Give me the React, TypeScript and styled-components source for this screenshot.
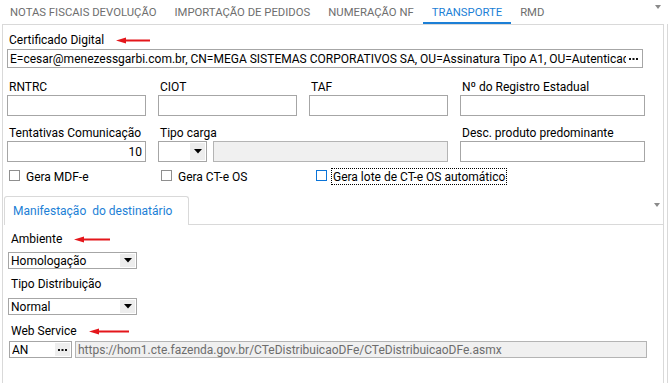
import React from "react";
import styled, { createGlobalStyle } from "styled-components";

const GlobalStyle = createGlobalStyle`
  html, body {
    margin: 0;
    padding: 0;
    background: #ffffff;
  }
  body {
    font-family: Roboto, "Liberation Sans", Arial, sans-serif;
    font-size: 12px;
    color: #000000;
  }
  * {
    box-sizing: border-box;
  }
`;

const BLUE = "#1c7fd6";
const PANEL_LINE = "#d9d9d9";
const INPUT_LINE = "#a6a6a6";

const Page = styled.div`
  width: 669px;
  height: 383px;
  overflow: hidden;
  display: flex;
  flex-direction: column;
`;

const TabBar = styled.div`
  display: flex;
  height: 24px;
  padding-left: 1px;
  flex-shrink: 0;
`;

const Tab = styled.div<{ $active?: boolean }>`
  height: 24px;
  padding: 4px 9px 0;
  line-height: 18px;
  font-size: 11.3px;
  text-transform: uppercase;
  white-space: nowrap;
  color: ${(p) => (p.$active ? BLUE : "#6e6e6e")};
  border-bottom: 2px solid ${(p) => (p.$active ? BLUE : "transparent")};
`;

const MenuCaret = styled.div<{ $top: number; $right: number }>`
  width: 0;
  height: 0;
  margin-left: auto;
  margin-right: ${(p) => p.$right}px;
  margin-top: ${(p) => p.$top}px;
  border-left: 3.5px solid transparent;
  border-right: 3.5px solid transparent;
  border-top: 4px solid #8a8a8a;
`;

const Frame = styled.div`
  display: flex;
  flex: 1;
  min-height: 0;
  padding-left: 2px;
`;

const Panel = styled.div`
  width: 662px;
  border: 1px solid ${PANEL_LINE};
  border-bottom: none;
  display: flex;
  flex-direction: column;
`;

const Edge = styled.div`
  width: 1px;
  margin-left: 3px;
  background: ${PANEL_LINE};
`;

const Fields = styled.div`
  padding: 7px 0 0 4px;
`;

const Label = styled.div<{ $indent?: number }>`
  display: flex;
  align-items: center;
  gap: 12px;
  height: 16px;
  line-height: 16px;
  padding-left: ${(p) => p.$indent ?? 2}px;
  white-space: nowrap;
`;

const TextBox = styled.div<{ $w?: number; $h?: number; $disabled?: boolean; $right?: boolean }>`
  display: flex;
  align-items: center;
  width: ${(p) => (p.$w ? `${p.$w}px` : "100%")};
  height: ${(p) => p.$h ?? 21}px;
  border: 1px solid ${(p) => (p.$disabled ? "#b4b4b4" : INPUT_LINE)};
  background: ${(p) => (p.$disabled ? "#f0f0f0" : "#ffffff")};
  color: ${(p) => (p.$disabled ? "#6d6d6d" : "#000000")};
  padding: 0 3px 0 2px;
  justify-content: ${(p) => (p.$right ? "flex-end" : "flex-start")};
  overflow: hidden;
  white-space: nowrap;
`;

const BoxText = styled.span`
  flex: 1;
  overflow: hidden;
  white-space: nowrap;
`;

const DotsButton = styled.span<{ $shaded?: boolean }>`
  display: flex;
  align-items: center;
  justify-content: center;
  width: 15px;
  align-self: stretch;
  margin: ${(p) => (p.$shaded ? "1px -2px 1px 0" : "0 -2px 0 0")};
  background: ${(p) => (p.$shaded ? "#eeeeee" : "transparent")};
`;

const CertBox = styled(TextBox)`
  margin-top: 1px;
`;

const Grid = styled.div`
  display: grid;
  grid-template-columns: 139px 139px 139px 185px;
  column-gap: 12px;
  row-gap: 9px;
  margin-top: 11px;
`;

const Field = styled.div<{ $span?: number }>`
  grid-column: span ${(p) => p.$span ?? 1};
  display: flex;
  flex-direction: column;
`;

const ComboPair = styled.div`
  display: flex;
  gap: 6px;
`;

const Combo = styled.div<{ $w: number; $h: number }>`
  display: flex;
  align-items: center;
  width: ${(p) => p.$w}px;
  height: ${(p) => p.$h}px;
  border: 1px solid ${INPUT_LINE};
  background: #ffffff;
  padding-left: 2px;
  flex-shrink: 0;
`;

const ComboValue = styled.span`
  flex: 1;
  white-space: nowrap;
`;

const ComboButton = styled.span`
  display: flex;
  align-items: center;
  justify-content: center;
  width: 15px;
  align-self: stretch;
  margin: 1px 1px 1px 0;
  background: #ededed;
`;

const CheckRow = styled.div`
  display: grid;
  grid-template-columns: 139px 139px 139px 185px;
  column-gap: 12px;
  margin-top: 6px;
  height: 17px;
`;

const CheckItem = styled.div<{ $offset: number }>`
  display: flex;
  align-items: center;
  margin-left: ${(p) => p.$offset}px;
  white-space: nowrap;
`;

const CheckBox = styled.span<{ $focused?: boolean }>`
  width: 11px;
  height: 11px;
  flex-shrink: 0;
  margin-top: -3px;
  border: 1px solid ${(p) => (p.$focused ? "#0b74d8" : "#8f8f8f")};
  background: #ffffff;
`;

const CheckText = styled.span<{ $focused?: boolean }>`
  margin-left: 4px;
  padding: 1px 1px 0;
  line-height: 14px;
  border: 1px dotted ${(p) => (p.$focused ? "#000000" : "transparent")};
`;

const InnerTabBar = styled.div`
  display: flex;
  height: 29px;
  margin-top: 11px;
`;

const InnerTab = styled.div`
  width: 185px;
  margin-left: 1px;
  height: 29px;
  padding: 6px 0 0 8px;
  line-height: 16px;
  white-space: pre;
  color: ${BLUE};
  border: 1px solid ${PANEL_LINE};
  border-bottom: none;
  border-radius: 3px 3px 0 0;
`;

const InnerFiller = styled.div`
  flex: 1;
  display: flex;
  border-bottom: 1px solid ${PANEL_LINE};
`;

const InnerBody = styled.div`
  padding: 6px 0 0 5px;
  display: flex;
  flex-direction: column;
`;

const Stack = styled.div<{ $gap: number }>`
  margin-top: ${(p) => p.$gap}px;
`;

const ServiceRow = styled.div`
  display: flex;
  align-items: center;
  gap: 3px;
  margin-top: 2px;
  margin-left: 1px;
`;

const Arrow = ({ width }: { width: number }) => (
  <svg width={width} height="7" viewBox={`0 0 ${width} 7`}>
    <polygon points="0,3.5 10,0.6 10,6.4" fill="#e4161b" />
    <rect x="9" y="2.5" width={width - 9} height="2" fill="#e4161b" />
  </svg>
);

const Caret = () => (
  <svg width="8" height="5" viewBox="0 0 8 5">
    <polygon points="0,0 8,0 4,4.5" fill="#000000" />
  </svg>
);

const Dots = () => (
  <svg width="9" height="2" viewBox="0 0 9 2">
    <rect x="0" y="0" width="2" height="2" fill="#111111" />
    <rect x="3.5" y="0" width="2" height="2" fill="#111111" />
    <rect x="7" y="0" width="2" height="2" fill="#111111" />
  </svg>
);

const tabs = [
  "Notas fiscais devolução",
  "Importação de pedidos",
  "Numeração NF",
  "Transporte",
  "RMD",
];

const App = () => {
  return (
    <Page>
      <GlobalStyle />
      <TabBar>
        {tabs.map((t) => (
          <Tab key={t} $active={t === "Transporte"}>
            {t}
          </Tab>
        ))}
        <MenuCaret $top={5} $right={8} />
      </TabBar>
      <Frame>
        <Panel>
          <Fields>
            <Label>
              Certificado Digital <Arrow width={34} />
            </Label>
            <CertBox $w={636} $h={19}>
              <BoxText>
                E=cesar@menezessgarbi.com.br, CN=MEGA SISTEMAS CORPORATIVOS SA, OU=Assinatura Tipo A1, OU=Autenticado
              </BoxText>
              <DotsButton>
                <Dots />
              </DotsButton>
            </CertBox>

            <Grid>
              <Field>
                <Label>RNTRC</Label>
                <TextBox />
              </Field>
              <Field>
                <Label>CIOT</Label>
                <TextBox />
              </Field>
              <Field>
                <Label>TAF</Label>
                <TextBox />
              </Field>
              <Field>
                <Label>Nº do Registro Estadual</Label>
                <TextBox />
              </Field>

              <Field>
                <Label>Tentativas Comunicação</Label>
                <TextBox $right>10</TextBox>
              </Field>
              <Field $span={2}>
                <Label>Tipo carga</Label>
                <ComboPair>
                  <Combo $w={49} $h={21}>
                    <ComboValue />
                    <ComboButton>
                      <Caret />
                    </ComboButton>
                  </Combo>
                  <TextBox $disabled />
                </ComboPair>
              </Field>
              <Field>
                <Label>Desc. produto predominante</Label>
                <TextBox />
              </Field>
            </Grid>

            <CheckRow>
              <CheckItem $offset={2}>
                <CheckBox />
                <CheckText>Gera MDF-e</CheckText>
              </CheckItem>
              <CheckItem $offset={3}>
                <CheckBox />
                <CheckText>Gera CT-e OS</CheckText>
              </CheckItem>
              <CheckItem $offset={7}>
                <CheckBox $focused />
                <CheckText $focused>Gera lote de CT-e OS automático</CheckText>
              </CheckItem>
            </CheckRow>
          </Fields>

          <InnerTabBar>
            <InnerTab>Manifestação  do destinatário</InnerTab>
            <InnerFiller>
              <MenuCaret $top={7} $right={3} />
            </InnerFiller>
          </InnerTabBar>

          <InnerBody>
            <Label $indent={3}>
              Ambiente <Arrow width={36} />
            </Label>
            <Stack $gap={5}>
              <Combo $w={129} $h={17}>
                <ComboValue>Homologação</ComboValue>
                <ComboButton>
                  <Caret />
                </ComboButton>
              </Combo>
            </Stack>
            <Stack $gap={7}>
              <Label $indent={3}>Tipo Distribuição</Label>
            </Stack>
            <Stack $gap={6}>
              <Combo $w={129} $h={17}>
                <ComboValue>Normal</ComboValue>
                <ComboButton>
                  <Caret />
                </ComboButton>
              </Combo>
            </Stack>
            <Stack $gap={8}>
              <Label $indent={3}>
                Web Service <Arrow width={40} />
              </Label>
            </Stack>
            <ServiceRow>
              <TextBox $w={63} $h={17}>
                <BoxText>AN</BoxText>
                <DotsButton $shaded>
                  <Dots />
                </DotsButton>
              </TextBox>
              <TextBox $w={572} $h={17} $disabled>
                https://hom1.cte.fazenda.gov.br/CTeDistribuicaoDFe/CTeDistribuicaoDFe.asmx
              </TextBox>
            </ServiceRow>
          </InnerBody>
        </Panel>
        <Edge />
      </Frame>
    </Page>
  );
};

export default App;
